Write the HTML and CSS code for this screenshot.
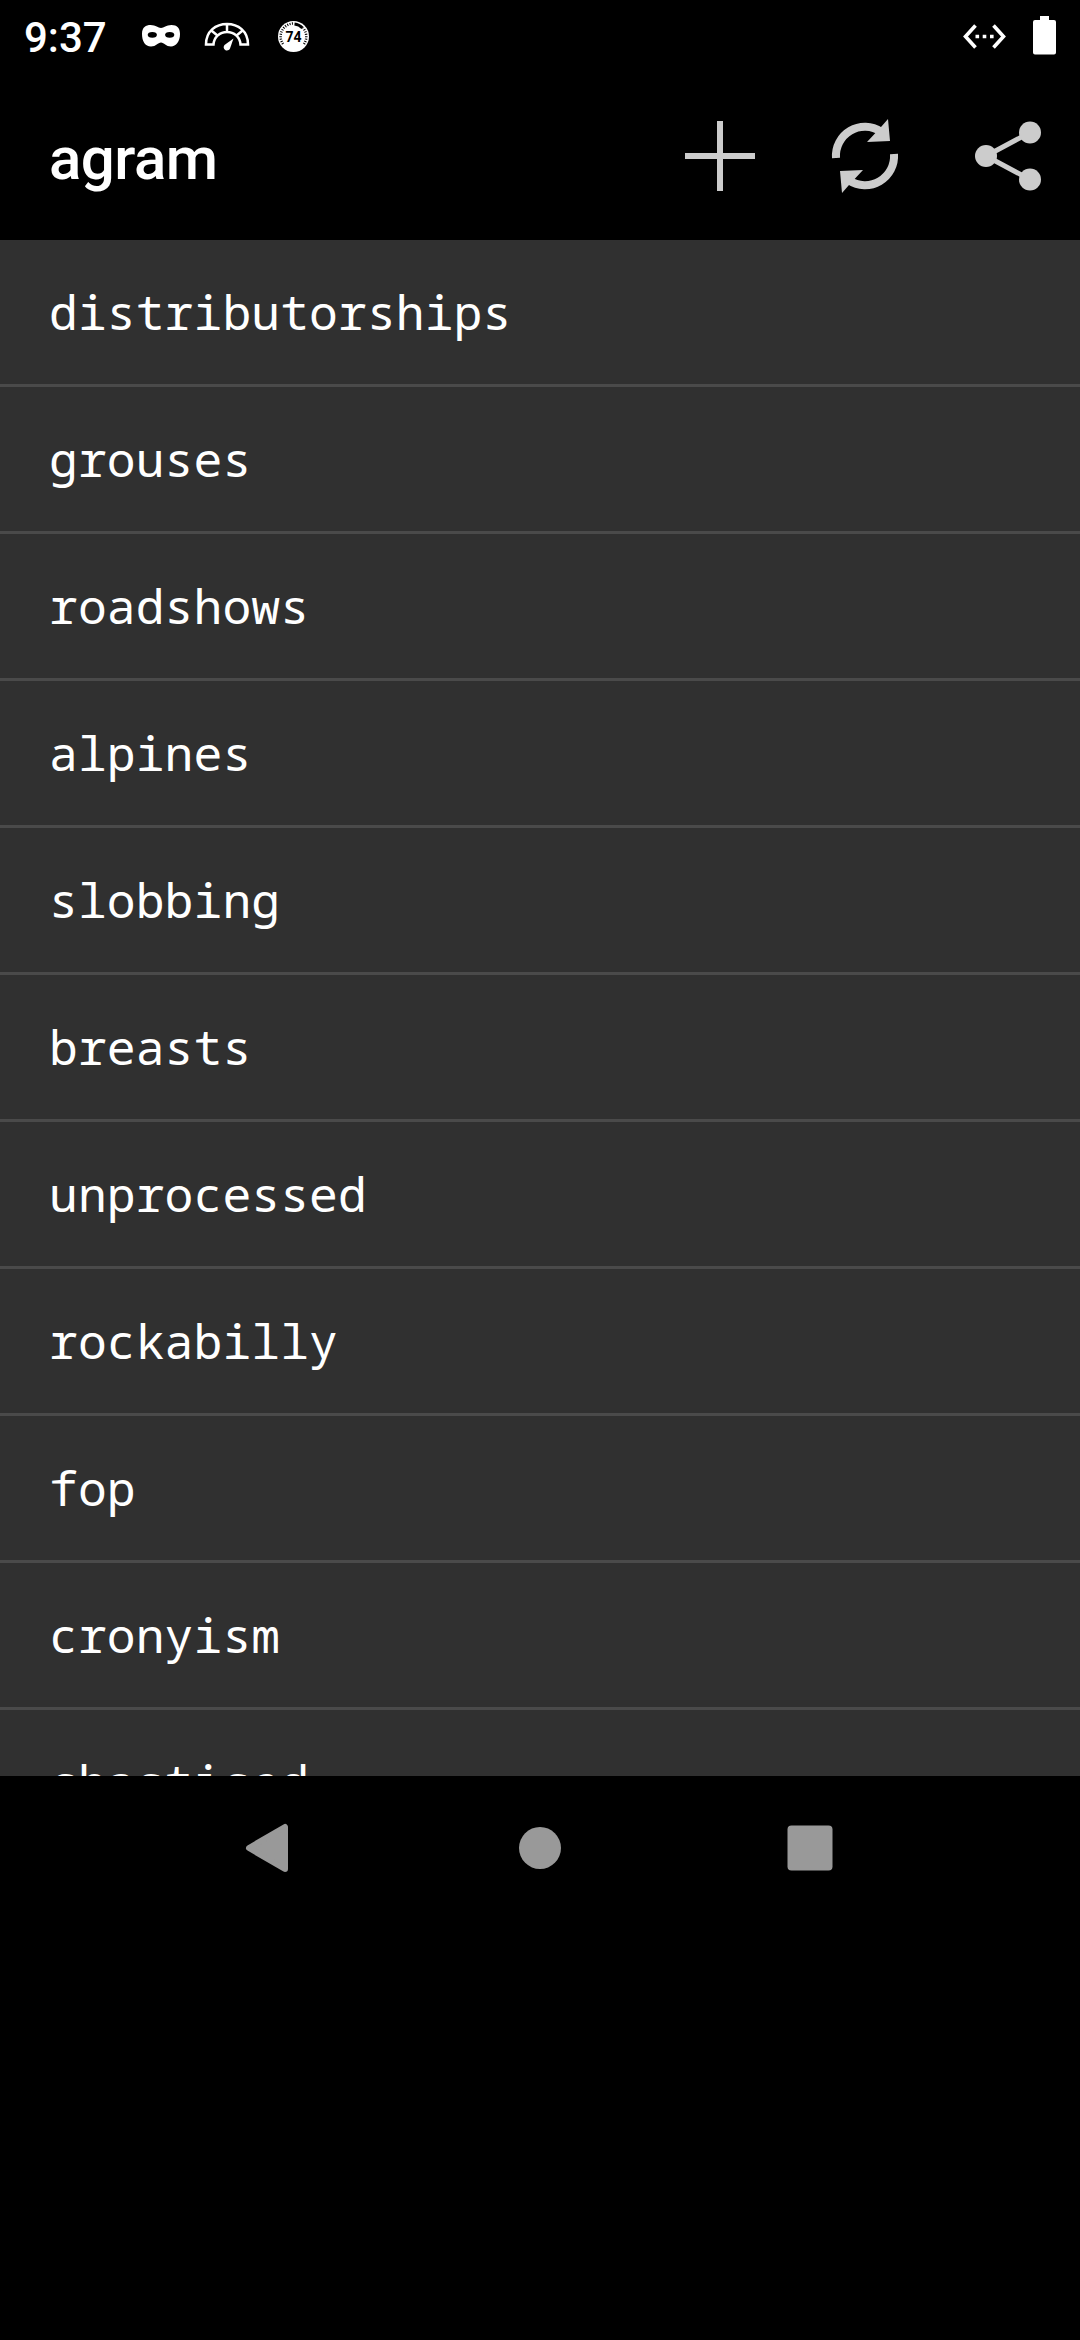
FILE: index.html
```html
<!DOCTYPE html>
<html lang="en">
<head>
<meta charset="utf-8">
<title>agram</title>
<link rel="stylesheet" href="styles.css">
</head>
<body>
<header class="status-bar">
  <span class="clock">9:37</span>
  <svg class="status-left" width="180" height="72" viewBox="136 0 180 72">
    <path fill="#fff" d="M142 34C142 27 146 25 150.500 25C156 25 158 28 161 28C164 28 166 25 171.500 25C177 25 180 28 180 34C180 41.500 176 46.500 171 46.500C166 46.500 164 42.500 161 42.500C158 42.500 156 46.500 151 46.500C145 46.500 142 41 142 34Z"/>
    <ellipse cx="152.300" cy="34.800" rx="4.600" ry="2.900"/>
    <ellipse cx="169.700" cy="34.800" rx="4.600" ry="2.900"/>
    <path fill="none" stroke="#fff" stroke-width="2.500" d="M206 44.500C206 31 216 24 227 24S248 31 248 44.500H240.500C240 37 234 32 227 32S214 37 213.500 44.500ZM227 24V32M212 31L218 36M242 31L236 36"/>
    <path fill="#fff" d="M233.500 38.500L230 48.500A3.300 3.300 0 1 1 224.500 45Z"/>
    <circle cx="293.500" cy="36.500" r="15.500" fill="#fff"/>
    <path fill="none" stroke="#000" stroke-width="2.500" stroke-dasharray="1 1.400" d="M283 44A13 13 0 0 1 293 23.500M304 44A13 13 0 0 0 303 28"/>
    <path fill="none" stroke="#000" stroke-width="3" d="M294.500 24A13 13 0 0 1 302.500 28"/>
    <text class="badge" x="293.500" y="41.500" text-anchor="middle">74</text>
  </svg>
  <svg class="status-right" width="120" height="72" viewBox="960 0 120 72">
    <path fill="none" stroke="#fff" stroke-width="3.600" d="M975.500 25.500L965.500 36.500L975.500 47.500M993.500 25.500L1003.500 36.500L993.500 47.500"/>
    <path fill="#fff" d="M975.500 34.700h3.600v3.600h-3.600zM982.700 34.700h3.600v3.600h-3.600zM990 34.700h3.600v3.600h-3.600zM1040 16h9v4h5a2 2 0 0 1 2 2v30.500a2 2 0 0 1-2 2h-19a2 2 0 0 1-2-2V22a2 2 0 0 1 2-2h5z"/>
  </svg>
</header>
<div class="app-bar">
  <h1 class="title">agram</h1>
  <nav class="actions">
    <svg width="144" height="144" viewBox="648 84 144 144"><path fill="#ccc" d="M717 121h6v32h32v6h-32v32h-6v-32h-32v-6h32z"/></svg>
    <svg width="144" height="144" viewBox="792 84 144 144">
      <path fill="none" stroke="#ccc" stroke-width="8" d="M836 158A29 29 0 0 1 881 131.700M894 154A29 29 0 0 1 849 180.300"/>
      <path fill="#ccc" d="M888 119L890 141L867 142L881 127ZM842 193L840 171L863 170L849 185Z"/>
    </svg>
    <svg width="144" height="144" viewBox="936 84 144 144">
      <path fill="none" stroke="#ccc" stroke-width="5" d="M1030 132.500L986 156L1030 179.500"/>
      <g fill="#ccc"><circle cx="986" cy="156" r="11"/><circle cx="1030" cy="132.500" r="11"/><circle cx="1030" cy="179.500" r="11"/></g>
    </svg>
  </nav>
</div>
<ul class="word-list">
  <li>distributorships</li>
  <li>grouses</li>
  <li>roadshows</li>
  <li>alpines</li>
  <li>slobbing</li>
  <li>breasts</li>
  <li>unprocessed</li>
  <li>rockabilly</li>
  <li>fop</li>
  <li>cronyism</li>
  <li>chastised</li>
</ul>
<nav class="nav-bar">
  <svg width="144" height="144" viewBox="-72 -72 144 144"><path fill="#999" stroke="#999" stroke-width="6" stroke-linejoin="round" d="M-21 0L15-21V21Z"/></svg>
  <svg width="144" height="144" viewBox="-72 -72 144 144"><circle r="21" fill="#999"/></svg>
  <svg width="144" height="144" viewBox="-72 -72 144 144"><rect x="-22.500" y="-22.500" width="45" height="45" rx="4" fill="#999"/></svg>
</nav>
</body>
</html>
```
FILE: styles.css
```css
* { box-sizing: border-box; }
body {
  margin: 0;
  width: 1080px;
  height: 2340px;
  overflow: hidden;
  background: #000;
  color: #fff;
  font-family: Roboto, sans-serif;
}
svg { display: block; flex: none; }
.status-bar { display: flex; height: 72px; padding-left: 24px; }
.clock {
  width: 112px;
  padding-top: 2px;
  font-size: 42px;
  font-weight: 500;
  line-height: 72px;
}
.badge { font: 700 14px Roboto, sans-serif; fill: #000; }
.status-right { margin-left: auto; }
.app-bar {
  display: flex;
  justify-content: space-between;
  height: 168px;
  padding: 12px 0 12px 49px;
}
.title {
  margin: 0;
  font-size: 60px;
  font-weight: 500;
  line-height: 150px;
  letter-spacing: -0.5px;
}
.actions { display: flex; }
.word-list {
  height: 1536px;
  margin: 0;
  padding: 0;
  overflow: hidden;
  list-style: none;
  background: #303030;
  font: 48px/144px "Droid Sans Mono", "Noto Sans Mono", "DejaVu Sans Mono", monospace;
  letter-spacing: 0.1px;
}
.word-list li {
  height: 147px;
  padding-left: 49px;
  border-bottom: 3px solid #4a4a4a;
}
.nav-bar {
  display: flex;
  justify-content: center;
  gap: 126px;
  height: 144px;
}
```
